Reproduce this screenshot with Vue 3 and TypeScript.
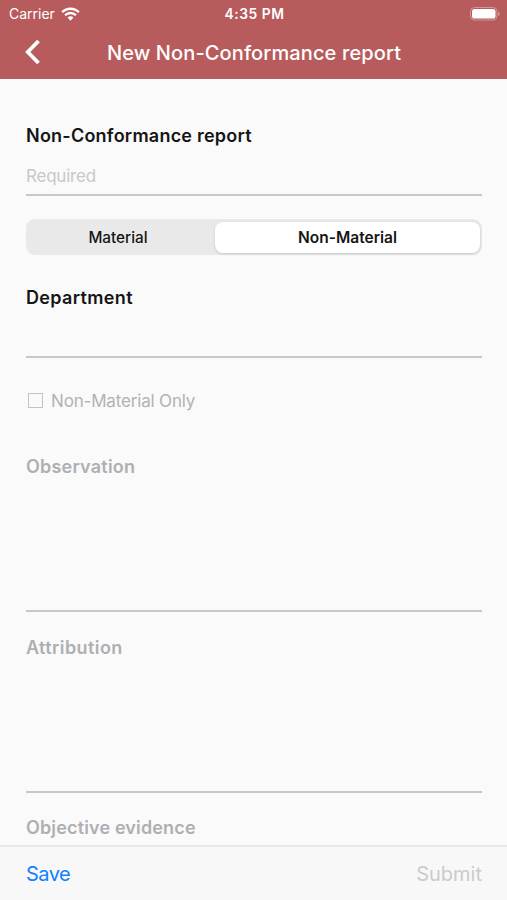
<script setup lang="ts">
import { ref } from 'vue'

const kinds = ['Material', 'Non-Material'] as const
const kind = ref<(typeof kinds)[number]>('Non-Material')
</script>

<template>
  <div class="screen">
    <header class="header">
      <div class="status">
        <div class="carrier">
          <span class="carrier-name">Carrier</span>
          <svg class="wifi" viewBox="0 0 20 14" width="19" height="14">
            <path d="M1.2 5.1a12.4 12.4 0 0 1 17.6 0M4.3 8.3a8 8 0 0 1 11.4 0" fill="none" stroke="#fff" stroke-width="2.5" />
            <path d="M10 14L6.9 10.8a4.4 4.4 0 0 1 6.2 0z" fill="#fff" />
          </svg>
        </div>
        <span class="time">4:35 PM</span>
        <svg class="battery" viewBox="0 0 31 14" width="31" height="14">
          <rect x="0.5" y="0.5" width="26.5" height="12.5" rx="4" fill="none" stroke="#d39798" />
          <rect x="2" y="2" width="23.5" height="9.5" rx="2.6" fill="#fff" />
          <path d="M28.4 4.7q1.9 2 0 4.2z" fill="#dca9aa" stroke="#d39798" stroke-width="0.6" />
        </svg>
      </div>
      <div class="nav">
        <svg class="back" viewBox="0 0 18 26" width="18" height="26">
          <path d="M14.5 2L3.8 13L14.5 24" fill="none" stroke="#fff" stroke-width="3.8" />
        </svg>
        <h1 class="title">New Non-Conformance report</h1>
      </div>
    </header>

    <main class="form">
      <section class="field report">
        <label class="label l-report">Non-Conformance report</label>
        <span class="placeholder">Required</span>
      </section>
      <div class="segments">
        <button
          v-for="k in kinds"
          :key="k"
          class="segment"
          :class="{ active: kind === k }"
          @click="kind = k"
        >{{ k }}</button>
      </div>
      <section class="field department">
        <label class="label l-dept">Department</label>
      </section>
      <div class="check">
        <span class="box"></span>
        <span class="check-text">Non-Material Only</span>
      </div>
      <section class="field area">
        <label class="label l-obs">Observation</label>
      </section>
      <section class="field area second">
        <label class="label l-attr">Attribution</label>
      </section>
      <section class="evidence">
        <label class="label l-obj">Objective evidence</label>
      </section>
    </main>

    <footer class="footer">
      <span class="save">Save</span>
      <span class="submit">Submit</span>
    </footer>
  </div>
</template>

<style>
body {
  margin: 0;
  background: #fafafa;
}
</style>

<style scoped>
.screen {
  width: 507px;
  height: 900px;
  display: flex;
  flex-direction: column;
  overflow: hidden;
  background: #fafafa;
  color: #151515;
  font-family: Inter, "Liberation Sans", sans-serif;
}
.header {
  height: 79px;
  flex: none;
  background: #b85b5c;
  color: #fff;
}
.status {
  height: 27px;
  display: grid;
  grid-template-columns: 1fr auto 1fr;
  align-items: center;
  padding: 0 7px 0 9px;
  box-sizing: border-box;
  font-size: 14px;
}
.carrier {
  display: flex;
  align-items: center;
  gap: 6px;
}
.time {
  font-size: 13.8px;
  font-weight: 600;
  letter-spacing: 0.55px;
}
.battery {
  justify-self: end;
  margin-right: -1px;
}
.nav {
  height: 50px;
  display: grid;
  grid-template-columns: 53px 1fr 53px;
  align-items: center;
}
.back {
  margin-left: 24px;
}
.title {
  margin: 0;
  padding: 1px 0 0 1px;
  text-align: center;
  font-size: 20px;
  line-height: 26px;
  font-weight: 550;
  letter-spacing: 0.12px;
  white-space: nowrap;
}
.form {
  flex: 1;
  min-height: 0;
  overflow: hidden;
  padding: 43px 25px 0 26px;
}
.field {
  box-sizing: border-box;
  border-bottom: 2px solid #c8c8c9;
  display: flex;
  flex-direction: column;
}
.label {
  font-size: 18px;
  line-height: 26px;
  font-weight: 600;
  white-space: nowrap;
}
.l-report {
  padding-top: 1px;
  letter-spacing: 0.23px;
}
.l-dept {
  letter-spacing: 0.35px;
}
.l-obs {
  padding-top: 1px;
  letter-spacing: 0.22px;
}
.l-attr {
  padding-top: 1px;
  letter-spacing: 0.42px;
}
.l-obj {
  letter-spacing: 0.15px;
}
.report {
  height: 74px;
}
.placeholder {
  margin-top: 16px;
  font-size: 17px;
  line-height: 22px;
  letter-spacing: -0.22px;
  color: #c8c8c9;
}
.segments {
  margin-top: 23px;
  height: 36px;
  box-sizing: border-box;
  padding: 3px 2px 2px 0;
  display: grid;
  grid-template-columns: 189px 1fr;
  border-radius: 9px;
  background: #e9e9e9;
}
.segment {
  border: 0;
  padding: 0 5px 0 0;
  border-radius: 8px;
  background: transparent;
  font: 500 15.3px/31px Inter, "Liberation Sans", sans-serif;
  color: #151515;
}
.segment.active {
  padding: 0;
  background: #fff;
  font-size: 15.5px;
  font-weight: 600;
  box-shadow: 0 1px 3px rgba(0, 0, 0, 0.14);
}
.department {
  margin-top: 30px;
  height: 73px;
}
.check {
  margin-top: 30px;
  height: 26px;
  display: flex;
  align-items: center;
  gap: 8px;
  padding-left: 2px;
  font-size: 17px;
  letter-spacing: -0.17px;
  color: #b1b2b5;
}
.box {
  width: 15px;
  height: 15px;
  margin-bottom: 1px;
  box-sizing: border-box;
  border: 1px solid #c4c4c7;
}
.area {
  margin-top: 39px;
  height: 159px;
  color: #aeafb3;
}
.area.second {
  margin-top: 22px;
}
.evidence {
  margin-top: 22px;
  color: #aeafb3;
}
.footer {
  flex: none;
  height: 55px;
  box-sizing: border-box;
  border-top: 2px solid #e8e8e8;
  background: #f8f8f8;
  padding: 0 25px 0 26px;
  display: flex;
  align-items: center;
  justify-content: space-between;
  font-size: 20px;
}
.save {
  color: #147efb;
  letter-spacing: -0.5px;
}
.submit {
  color: #cbcbcc;
}
</style>
